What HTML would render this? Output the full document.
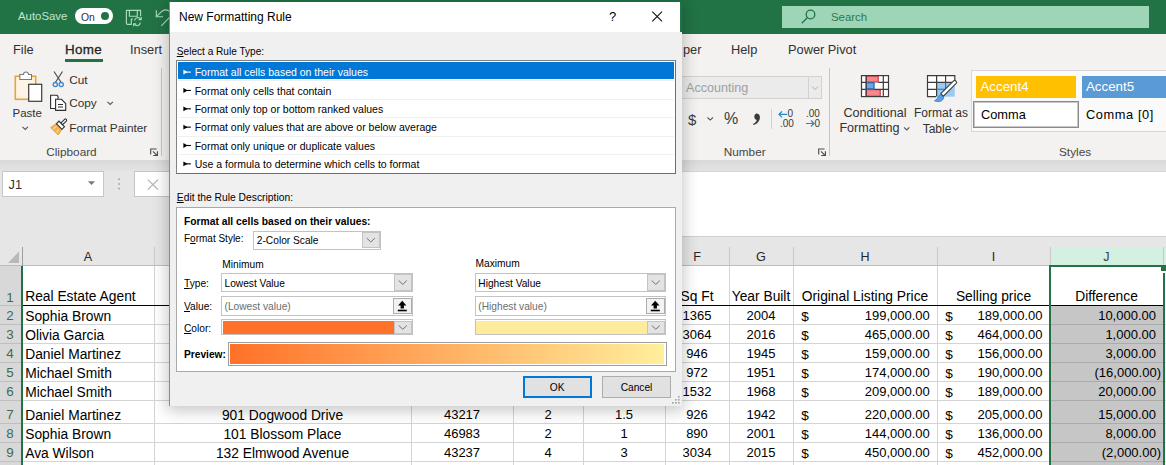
<!DOCTYPE html><html><head><meta charset="utf-8"><style>
html,body{margin:0;padding:0;}
body{width:1166px;height:465px;overflow:hidden;position:relative;background:#fff;font-family:"Liberation Sans", sans-serif;}
.t{position:absolute;white-space:nowrap;}
.b{position:absolute;box-sizing:border-box;}
svg{position:absolute;overflow:visible;}
</style></head><body>
<div class="b" style="left:0px;top:0px;width:1166px;height:34px;background:#217346;"></div>
<div class="t" style="left:18px;top:9.3px;font-size:11.4px;line-height:15px;color:#c2e4cd;font-weight:normal;">AutoSave</div>
<div class="b" style="left:75px;top:8px;width:38px;height:16px;background:#fff;border-radius:8px;"></div>
<div class="t" style="left:81px;top:10.9px;font-size:10.4px;line-height:14px;color:#333;font-weight:normal;">On</div>
<div class="b" style="left:101px;top:12px;width:8px;height:8px;background:#217346;border-radius:50%;"></div>
<svg style="left:0;top:0" width="1166" height="34"><g fill="none" stroke="#a9dcbd" stroke-width="1.15" stroke-linejoin="round"><path d="M140.6 16.2 V10.4 H126.4 V23.2 Q126.4 24.4 127.6 24.4 H131.3 V19 H133"/><path d="M129.4 10.4 V16.2 H137.3 V10.4"/><path d="M134.5 20.6 A3.4 3.4 0 0 1 140.6 19 M140.4 22.6 A3.4 3.4 0 0 1 134.3 24.2"/><path d="M141.2 17 V19.6 H138.6 M133.6 26.3 V23.7 H136.2"/></g><g fill="none" stroke="#a9dcbd" stroke-width="1.15"><path d="M156.3 10.2 V16.7 H163"/><path d="M156.6 16.4 L161.5 11.6 C164.5 8.8 170.5 9.5 170.5 14.5 C170.5 16 169.8 17.2 168.6 18.4 L161.3 25.8"/></g></svg>
<div class="b" style="left:782px;top:6px;width:367px;height:22px;background:#9fd5b7;"></div>
<svg style="left:0;top:0" width="1166" height="34"><g fill="none" stroke="#217346" stroke-width="1.3"><circle cx="810.5" cy="14.5" r="4.3"/><path d="M807.3 17.7 L801.8 23.2"/></g></svg>
<div class="t" style="left:831px;top:10.1px;font-size:11.4px;line-height:15px;color:#2a7a50;font-weight:normal;">Search</div>
<div class="b" style="left:0px;top:34px;width:1166px;height:126px;background:#f3f2f1;"></div>
<div class="t" style="left:13px;top:41.1px;font-size:12.8px;line-height:17px;color:#323130;font-weight:normal;">File</div>
<div class="t" style="left:65px;top:40.6px;font-size:13.4px;line-height:18px;color:#262626;font-weight:normal;letter-spacing:0.35px;-webkit-text-stroke:0.3px #262626;">Home</div>
<div class="b" style="left:65px;top:59px;width:38px;height:3px;background:#217346;"></div>
<div class="t" style="left:130px;top:41.1px;font-size:12.8px;line-height:17px;color:#323130;font-weight:normal;">Insert</div>
<div class="t" style="left:683px;top:41.1px;font-size:12.8px;line-height:17px;color:#323130;font-weight:normal;">per</div>
<div class="t" style="left:731px;top:41.1px;font-size:12.8px;line-height:17px;color:#323130;font-weight:normal;">Help</div>
<div class="t" style="left:788px;top:41.1px;font-size:12.8px;line-height:17px;color:#323130;font-weight:normal;">Power Pivot</div>
<svg style="left:0;top:0" width="170" height="160"><rect x="15.3" y="76.3" width="20.4" height="23" fill="#fdf4e6" stroke="#e9a23b" stroke-width="1.6"/><path d="M19.8 79.5 V74.5 H23.5 a2.5 2.5 0 0 1 5 0 H31.5 V79.5 Z" fill="#fff" stroke="#7a7a7a" stroke-width="1.1"/><rect x="28.7" y="84.3" width="13" height="17" fill="#fff" stroke="#3b3b3b" stroke-width="1.2"/><g fill="none" stroke="#4f4f4f" stroke-width="1.2"><path d="M54 71.5 L61.5 83 M62.5 71.5 L55 83"/></g><g fill="none" stroke="#3f86c9" stroke-width="1.3"><circle cx="55.3" cy="84.6" r="2.1"/><circle cx="61.2" cy="84.6" r="2.1"/></g><g fill="#fff" stroke="#2f2f2f" stroke-width="1.1"><path d="M50.6 95.3 H57 L58 96.3 V108.5 H50.6 Z"/><path d="M55.6 99.3 H61.5 L65.7 103.5 V110.4 H55.6 Z"/></g><g stroke="#2f2f2f" stroke-width="1"><path d="M58 104.5 H63 M58 107 H63"/></g><g transform="translate(60.6 125) rotate(-45)"><path d="M-2 -4 L-8.8 -5.2 L-8.8 5.2 L-2 4 Z" fill="#f7b04f" stroke="#ee9a2c" stroke-width="0.9" stroke-linejoin="round"/><path d="M-4 -2 L-8 -2.5 M-4.5 1.8 L-8 2.5" stroke="#fde3b8" stroke-width="1"/><rect x="-2" y="-3.9" width="3.6" height="7.8" fill="#fff" stroke="#333" stroke-width="1.1"/><path d="M1.6 -1.2 H6.8 A1.2 1.2 0 0 1 6.8 1.2 H1.6 Z" fill="#fff" stroke="#333" stroke-width="1.1"/></g><path d="M150.7 154.5 V149 H156.6 M153 151.4 L157 155.3 M157.4 151.3 V155.5 H153.3" fill="none" stroke="#484848" stroke-width="1.1"/></svg>
<div class="t" style="left:12.5px;top:105.3px;font-size:11.5px;line-height:16px;color:#323130;font-weight:normal;">Paste</div>
<svg style="left:0;top:0" width="170" height="160"><path d="M22.5 126.8 L25.2 129.4 L27.9 126.8" fill="none" stroke="#555" stroke-width="1.1"/><path d="M107.5 101.8 L110.2 104.4 L112.9 101.8" fill="none" stroke="#555" stroke-width="1.1"/></svg>
<div class="t" style="left:69.2px;top:72.3px;font-size:11.8px;line-height:16px;color:#323130;font-weight:normal;">Cut</div>
<div class="t" style="left:69.2px;top:95.3px;font-size:11.8px;line-height:16px;color:#323130;font-weight:normal;">Copy</div>
<div class="t" style="left:69.2px;top:119.6px;font-size:11.8px;line-height:16px;color:#323130;font-weight:normal;">Format Painter</div>
<div class="t" style="left:46.2px;top:144.0px;font-size:11.8px;line-height:16px;color:#484644;font-weight:normal;">Clipboard</div>
<div class="b" style="left:161px;top:68px;width:1px;height:88px;background:#c8c6c4;"></div>
<div class="b" style="left:676px;top:76px;width:146px;height:23px;background:#ebebeb;border:1px solid #d2d2d2;"></div>
<div class="b" style="left:808px;top:77px;width:1px;height:21px;background:#d2d2d2;"></div>
<svg style="left:0;top:0" width="1166" height="160"><path d="M812 86.5 L815 89.5 L818 86.5" fill="none" stroke="#b0b0b0" stroke-width="1"/><path d="M707.5 117.5 L710.2 120.1 L712.9 117.5" fill="none" stroke="#555" stroke-width="1.1"/></svg>
<div class="t" style="left:686px;top:80.0px;font-size:12.6px;line-height:17px;color:#a19f9d;font-weight:normal;">Accounting</div>
<div class="t" style="left:688px;top:108.9px;font-size:15px;line-height:21px;color:#3b3a39;font-weight:normal;">$</div>
<div class="t" style="left:724px;top:108.4px;font-size:16px;line-height:22px;color:#3b3a39;font-weight:normal;">%</div>
<svg style="left:0;top:0" width="1166" height="160"><path d="M756.3 113.6 a3.4 3.4 0 0 1 3.6 3.6 c0 3.8 -2.8 6.8 -6.4 7.8 l-0.5 -1 c2 -1 3.4 -2.4 3.7 -4 a3.4 3.4 0 0 1 -0.4 -6.4 z" fill="#3b3a39"/></svg>
<div class="b" style="left:771px;top:109px;width:1px;height:20px;background:#d2d0ce;"></div>
<svg style="left:0;top:0" width="1166" height="160"><g fill="none" stroke="#1e8bcd" stroke-width="1.2"><path d="M779 114.3 H787 M782 111.3 L779 114.3 L782 117.3"/><path d="M806 123.5 H814 M811 120.5 L814 123.5 L811 126.5"/></g></svg>
<div class="t" style="left:787.5px;top:108.0px;font-size:10px;line-height:11px;color:#3b3a39;font-weight:normal;">0</div>
<div class="t" style="left:780px;top:118.0px;font-size:10px;line-height:11px;color:#3b3a39;font-weight:normal;">.00</div>
<div class="t" style="left:806px;top:108.0px;font-size:10px;line-height:11px;color:#3b3a39;font-weight:normal;">.00</div>
<div class="t" style="left:814.5px;top:118.0px;font-size:10px;line-height:11px;color:#3b3a39;font-weight:normal;">0</div>
<div class="t" style="left:723.7px;top:144.0px;font-size:11.8px;line-height:16px;color:#484644;font-weight:normal;">Number</div>
<svg style="left:0;top:0" width="1166" height="160"><path d="M818.7 154.5 V149 H824.6 M821 151.4 L825 155.3 M825.4 151.3 V155.5 H821.3" fill="none" stroke="#484848" stroke-width="1.1"/></svg>
<div class="b" style="left:829px;top:68px;width:1px;height:88px;background:#c8c6c4;"></div>
<svg style="left:0;top:0" width="1166" height="160"><rect x="861.5" y="75.5" width="27" height="21" fill="#fff"/><rect x="866" y="75.8" width="12.5" height="6.5" fill="#f7868d"/><rect x="866" y="89.3" width="14.5" height="7" fill="#f7868d"/><rect x="866" y="82.3" width="8.5" height="7" fill="#6aa8e0"/><g fill="none" stroke="#c0343c" stroke-width="1"><rect x="866.5" y="76" width="11.7" height="6"/><rect x="866.5" y="89.7" width="13.7" height="6.5"/></g><rect x="866.5" y="82.8" width="7.5" height="6" fill="none" stroke="#1f5fa6" stroke-width="1"/><g fill="none" stroke="#3b3b3b" stroke-width="1.2"><rect x="861.5" y="75.6" width="27" height="21"/><path d="M861.5 82.3 H866 M878.5 82.3 H888.5 M861.5 89.3 H866 M874.5 89.3 H888.5 M866 75.6 V96.6 M883.3 75.6 V96.6"/></g><rect x="927.5" y="75.5" width="27.3" height="21" fill="#fff"/><rect x="936.6" y="82.3" width="18.2" height="14.4" fill="#9ccaf0"/><g fill="none" stroke="#3b3b3b" stroke-width="1.2"><path d="M954.8 82 V75.6 H927.5 V96.6 H936"/><path d="M927.5 82.3 H954.8 M927.5 89.3 H936.6 M936.6 75.6 V96.6 M945.6 75.6 V82.3"/></g><g fill="none" stroke="#2f6fb0" stroke-width="1.1"><path d="M936.6 89.3 H948 M945.6 82.3 V92"/></g><path d="M940.8 93.6 L953.6 80.8 C955 79.4 957.6 82 956.2 83.4 L943.4 96.2 Z" fill="#fff" stroke="#3b3b3b" stroke-width="1.1"/><path d="M934.5 100.8 C937.5 100.2 937.5 96.5 940.2 94.6 L943.8 97.6 C942.8 101.2 939.5 102.6 934.5 100.8 Z" fill="#5aa2e6" stroke="#3a7cc0" stroke-width="0.9"/></svg>
<div class="t" style="left:775.0px;width:200px;text-align:center;top:104.5px;font-size:12.6px;line-height:17px;color:#323130;font-weight:normal;">Conditional</div>
<div class="t" style="left:769.5px;width:200px;text-align:center;top:120.2px;font-size:12.6px;line-height:17px;color:#323130;font-weight:normal;">Formatting</div>
<div class="t" style="left:841.0px;width:200px;text-align:center;top:105.0px;font-size:12px;line-height:16px;color:#323130;font-weight:normal;">Format as</div>
<div class="t" style="left:837.0px;width:200px;text-align:center;top:120.7px;font-size:12px;line-height:16px;color:#323130;font-weight:normal;">Table</div>
<svg style="left:0;top:0" width="1166" height="160"><path d="M904 127.3 L906.7 129.9 L909.4 127.3" fill="none" stroke="#555" stroke-width="1.1"/><path d="M953 127.3 L955.7 129.9 L958.4 127.3" fill="none" stroke="#555" stroke-width="1.1"/></svg>
<div class="b" style="left:971px;top:70px;width:200px;height:62px;background:#fafafa;border:1px solid #d6d6d6;"></div>
<div class="b" style="left:976px;top:76px;width:100px;height:22px;background:#ffc000;"></div>
<div class="t" style="left:980.5px;top:77.9px;font-size:13.3px;line-height:18px;color:#fff;font-weight:normal;">Accent4</div>
<div class="b" style="left:1082px;top:76px;width:90px;height:22px;background:#5b9bd5;"></div>
<div class="t" style="left:1086px;top:77.9px;font-size:13.3px;line-height:18px;color:#fff;font-weight:normal;">Accent5</div>
<div class="b" style="left:973px;top:101px;width:106px;height:27px;background:#fff;border:1px solid #8a8a8a;box-shadow:inset 0 0 0 1px #c8c8c8;"></div>
<div class="t" style="left:981px;top:105.5px;font-size:12.8px;line-height:17px;color:#000;font-weight:normal;">Comma</div>
<div class="t" style="left:1086px;top:105.5px;font-size:12.8px;line-height:17px;color:#000;font-weight:normal;letter-spacing:0.6px;">Comma [0]</div>
<div class="t" style="left:1059px;top:144.2px;font-size:11.8px;line-height:16px;color:#484644;font-weight:normal;">Styles</div>
<div class="b" style="left:0px;top:160px;width:1166px;height:106px;background:#e6e6e6;"></div>
<div class="b" style="left:0px;top:160px;width:1166px;height:11px;background:linear-gradient(#d9d9d9,#e3e3e3);"></div>
<div class="b" style="left:2px;top:171px;width:102px;height:26px;background:#fff;border:1px solid #c6c6c6;"></div>
<div class="b" style="left:134px;top:171px;width:60px;height:26px;background:#fff;border:1px solid #c6c6c6;"></div>
<div class="t" style="left:8.5px;top:176.0px;font-size:12.8px;line-height:17px;color:#333;font-weight:normal;">J1</div>
<svg style="left:0;top:0" width="200" height="200"><path d="M88 181.3 H95 L91.5 185 Z" fill="#777"/><g fill="#9a9a9a"><rect x="118.3" y="178.5" width="1.5" height="1.6"/><rect x="118.3" y="183.2" width="1.5" height="1.6"/><rect x="118.3" y="187.8" width="1.5" height="1.6"/></g><path d="M147.8 179.6 L158 189.6 M158 179.6 L147.8 189.6" stroke="#b3b3b3" stroke-width="1.3"/></svg>
<div class="b" style="left:400px;top:171px;width:766px;height:66px;background:#fff;border-top:1px solid #d4d4d4;border-bottom:1px solid #cfcfcf;"></div>
<div class="b" style="left:0px;top:247px;width:1166px;height:19px;background:#e6e6e6;"></div>
<div class="b" style="left:1050px;top:247px;width:116px;height:19px;background:#d3f0e0;"></div>
<div class="b" style="left:154px;top:247px;width:1px;height:19px;background:#c9c9c9;"></div>
<div class="b" style="left:411px;top:247px;width:1px;height:19px;background:#c9c9c9;"></div>
<div class="b" style="left:513px;top:247px;width:1px;height:19px;background:#c9c9c9;"></div>
<div class="b" style="left:583px;top:247px;width:1px;height:19px;background:#c9c9c9;"></div>
<div class="b" style="left:665px;top:247px;width:1px;height:19px;background:#c9c9c9;"></div>
<div class="b" style="left:729px;top:247px;width:1px;height:19px;background:#c9c9c9;"></div>
<div class="b" style="left:793px;top:247px;width:1px;height:19px;background:#c9c9c9;"></div>
<div class="b" style="left:937px;top:247px;width:1px;height:19px;background:#c9c9c9;"></div>
<div class="b" style="left:1050px;top:247px;width:1px;height:19px;background:#c9c9c9;"></div>
<div class="b" style="left:0px;top:265px;width:1166px;height:1px;background:#bdbdbd;"></div>
<div class="b" style="left:1050px;top:265px;width:116px;height:1px;background:#217346;"></div>
<div class="b" style="left:1163px;top:247px;width:1px;height:19px;background:#c9c9c9;"></div>
<div class="t" style="left:-12.0px;width:200px;text-align:center;top:248.5px;font-size:12.6px;line-height:17px;color:#262626;font-weight:normal;">A</div>
<div class="t" style="left:182.5px;width:200px;text-align:center;top:248.5px;font-size:12.6px;line-height:17px;color:#262626;font-weight:normal;">B</div>
<div class="t" style="left:362.0px;width:200px;text-align:center;top:248.5px;font-size:12.6px;line-height:17px;color:#262626;font-weight:normal;">C</div>
<div class="t" style="left:448.0px;width:200px;text-align:center;top:248.5px;font-size:12.6px;line-height:17px;color:#262626;font-weight:normal;">D</div>
<div class="t" style="left:524.0px;width:200px;text-align:center;top:248.5px;font-size:12.6px;line-height:17px;color:#262626;font-weight:normal;">E</div>
<div class="t" style="left:597.0px;width:200px;text-align:center;top:248.5px;font-size:12.6px;line-height:17px;color:#262626;font-weight:normal;">F</div>
<div class="t" style="left:661.0px;width:200px;text-align:center;top:248.5px;font-size:12.6px;line-height:17px;color:#262626;font-weight:normal;">G</div>
<div class="t" style="left:765.0px;width:200px;text-align:center;top:248.5px;font-size:12.6px;line-height:17px;color:#262626;font-weight:normal;">H</div>
<div class="t" style="left:893.5px;width:200px;text-align:center;top:248.5px;font-size:12.6px;line-height:17px;color:#262626;font-weight:normal;">I</div>
<div class="t" style="left:1006.5px;width:200px;text-align:center;top:248.5px;font-size:12.6px;line-height:17px;color:#2c4a3a;font-weight:normal;">J</div>
<svg style="left:0;top:0" width="30" height="270"><path d="M8 263 H19 V251.5 Z" fill="#b8b8b8"/></svg>
<div class="b" style="left:21.5px;top:247px;width:1px;height:19px;background:#9e9e9e;"></div>
<div class="b" style="left:0px;top:266px;width:22px;height:214px;background:#d8d8d8;"></div>
<div class="b" style="left:0px;top:305px;width:22px;height:1px;background:#bfbfbf;"></div>
<div class="b" style="left:0px;top:324px;width:22px;height:1px;background:#bfbfbf;"></div>
<div class="b" style="left:0px;top:343px;width:22px;height:1px;background:#bfbfbf;"></div>
<div class="b" style="left:0px;top:362px;width:22px;height:1px;background:#bfbfbf;"></div>
<div class="b" style="left:0px;top:381px;width:22px;height:1px;background:#bfbfbf;"></div>
<div class="b" style="left:0px;top:400px;width:22px;height:1px;background:#bfbfbf;"></div>
<div class="b" style="left:0px;top:423px;width:22px;height:1px;background:#bfbfbf;"></div>
<div class="b" style="left:0px;top:442px;width:22px;height:1px;background:#bfbfbf;"></div>
<div class="b" style="left:0px;top:461px;width:22px;height:1px;background:#bfbfbf;"></div>
<div class="b" style="left:0px;top:480px;width:22px;height:1px;background:#bfbfbf;"></div>
<div class="t" style="left:0.0px;width:20px;text-align:center;top:288.6px;font-size:13.4px;line-height:18px;color:#3f6b52;font-weight:normal;">1</div>
<div class="t" style="left:0.0px;width:20px;text-align:center;top:307.4px;font-size:13.4px;line-height:18px;color:#3f6b52;font-weight:normal;">2</div>
<div class="t" style="left:0.0px;width:20px;text-align:center;top:326.4px;font-size:13.4px;line-height:18px;color:#3f6b52;font-weight:normal;">3</div>
<div class="t" style="left:0.0px;width:20px;text-align:center;top:345.4px;font-size:13.4px;line-height:18px;color:#3f6b52;font-weight:normal;">4</div>
<div class="t" style="left:0.0px;width:20px;text-align:center;top:364.4px;font-size:13.4px;line-height:18px;color:#3f6b52;font-weight:normal;">5</div>
<div class="t" style="left:0.0px;width:20px;text-align:center;top:383.4px;font-size:13.4px;line-height:18px;color:#3f6b52;font-weight:normal;">6</div>
<div class="t" style="left:0.0px;width:20px;text-align:center;top:406.4px;font-size:13.4px;line-height:18px;color:#3f6b52;font-weight:normal;">7</div>
<div class="t" style="left:0.0px;width:20px;text-align:center;top:425.4px;font-size:13.4px;line-height:18px;color:#3f6b52;font-weight:normal;">8</div>
<div class="t" style="left:0.0px;width:20px;text-align:center;top:444.4px;font-size:13.4px;line-height:18px;color:#3f6b52;font-weight:normal;">9</div>
<div class="b" style="left:21px;top:266px;width:2px;height:214px;background:#217346;"></div>
<div class="b" style="left:23px;top:266px;width:1143px;height:214px;background:#fff;"></div>
<div class="b" style="left:1051px;top:306px;width:112px;height:174px;background:#c6c6c6;"></div>
<div class="b" style="left:23px;top:324px;width:1027px;height:1px;background:#d4d4d4;"></div>
<div class="b" style="left:1051px;top:324px;width:112px;height:1px;background:#ababab;"></div>
<div class="b" style="left:23px;top:343px;width:1027px;height:1px;background:#d4d4d4;"></div>
<div class="b" style="left:1051px;top:343px;width:112px;height:1px;background:#ababab;"></div>
<div class="b" style="left:23px;top:362px;width:1027px;height:1px;background:#d4d4d4;"></div>
<div class="b" style="left:1051px;top:362px;width:112px;height:1px;background:#ababab;"></div>
<div class="b" style="left:23px;top:381px;width:1027px;height:1px;background:#d4d4d4;"></div>
<div class="b" style="left:1051px;top:381px;width:112px;height:1px;background:#ababab;"></div>
<div class="b" style="left:23px;top:400px;width:1027px;height:1px;background:#d4d4d4;"></div>
<div class="b" style="left:1051px;top:400px;width:112px;height:1px;background:#ababab;"></div>
<div class="b" style="left:23px;top:423px;width:1027px;height:1px;background:#d4d4d4;"></div>
<div class="b" style="left:1051px;top:423px;width:112px;height:1px;background:#ababab;"></div>
<div class="b" style="left:23px;top:442px;width:1027px;height:1px;background:#d4d4d4;"></div>
<div class="b" style="left:1051px;top:442px;width:112px;height:1px;background:#ababab;"></div>
<div class="b" style="left:23px;top:461px;width:1027px;height:1px;background:#d4d4d4;"></div>
<div class="b" style="left:1051px;top:461px;width:112px;height:1px;background:#ababab;"></div>
<div class="b" style="left:23px;top:480px;width:1027px;height:1px;background:#d4d4d4;"></div>
<div class="b" style="left:1051px;top:480px;width:112px;height:1px;background:#ababab;"></div>
<div class="b" style="left:1163px;top:266px;width:3px;height:214px;background:#fff;"></div>
<div class="b" style="left:1163px;top:324px;width:3px;height:1px;background:#d4d4d4;"></div>
<div class="b" style="left:1163px;top:343px;width:3px;height:1px;background:#d4d4d4;"></div>
<div class="b" style="left:1163px;top:362px;width:3px;height:1px;background:#d4d4d4;"></div>
<div class="b" style="left:1163px;top:381px;width:3px;height:1px;background:#d4d4d4;"></div>
<div class="b" style="left:1163px;top:400px;width:3px;height:1px;background:#d4d4d4;"></div>
<div class="b" style="left:1163px;top:423px;width:3px;height:1px;background:#d4d4d4;"></div>
<div class="b" style="left:1163px;top:442px;width:3px;height:1px;background:#d4d4d4;"></div>
<div class="b" style="left:1163px;top:461px;width:3px;height:1px;background:#d4d4d4;"></div>
<div class="b" style="left:1163px;top:480px;width:3px;height:1px;background:#d4d4d4;"></div>
<div class="b" style="left:154px;top:266px;width:1px;height:214px;background:#d4d4d4;"></div>
<div class="b" style="left:411px;top:266px;width:1px;height:214px;background:#d4d4d4;"></div>
<div class="b" style="left:513px;top:266px;width:1px;height:214px;background:#d4d4d4;"></div>
<div class="b" style="left:583px;top:266px;width:1px;height:214px;background:#d4d4d4;"></div>
<div class="b" style="left:665px;top:266px;width:1px;height:214px;background:#d4d4d4;"></div>
<div class="b" style="left:729px;top:266px;width:1px;height:214px;background:#d4d4d4;"></div>
<div class="b" style="left:793px;top:266px;width:1px;height:214px;background:#d4d4d4;"></div>
<div class="b" style="left:937px;top:266px;width:1px;height:214px;background:#d4d4d4;"></div>
<div class="b" style="left:1050px;top:266px;width:1px;height:214px;background:#d4d4d4;"></div>
<div class="b" style="left:23px;top:304.5px;width:1140px;height:1.6px;background:#000;"></div>
<div class="b" style="left:1049px;top:265px;width:2px;height:215px;background:#217346;"></div>
<div class="b" style="left:1162.5px;top:272.5px;width:2px;height:208px;background:#217346;"></div>
<div class="b" style="left:1049px;top:265px;width:114px;height:2px;background:#217346;"></div>
<div class="b" style="left:1161px;top:265px;width:5px;height:6px;background:#217346;"></div>
<div class="t" style="left:25.2px;top:287.0px;font-size:13.8px;line-height:19px;color:#000;font-weight:normal;">Real Estate Agent</div>
<div class="t" style="left:597.0px;width:200px;text-align:center;top:287.0px;font-size:13.8px;line-height:19px;color:#000;font-weight:normal;">Sq Ft</div>
<div class="t" style="left:661.0px;width:200px;text-align:center;top:287.0px;font-size:13.8px;line-height:19px;color:#000;font-weight:normal;">Year Built</div>
<div class="t" style="left:765.0px;width:200px;text-align:center;top:287.0px;font-size:13.8px;line-height:19px;color:#000;font-weight:normal;">Original Listing Price</div>
<div class="t" style="left:893.5px;width:200px;text-align:center;top:287.0px;font-size:13.8px;line-height:19px;color:#000;font-weight:normal;">Selling price</div>
<div class="t" style="left:1006.5px;width:200px;text-align:center;top:287.0px;font-size:13.8px;line-height:19px;color:#000;font-weight:normal;">Difference</div>
<div class="t" style="left:25.2px;top:306.5px;font-size:13.8px;line-height:19px;color:#000;font-weight:normal;">Sophia Brown</div>
<div class="t" style="left:597.0px;width:200px;text-align:center;top:307.0px;font-size:13.0px;line-height:18px;color:#000;font-weight:normal;">1365</div>
<div class="t" style="left:661.0px;width:200px;text-align:center;top:307.0px;font-size:13.0px;line-height:18px;color:#000;font-weight:normal;">2004</div>
<div class="t" style="left:801.2px;top:306.5px;font-size:13.6px;line-height:19px;color:#000;font-weight:normal;">$</div>
<div class="t" style="left:629.8px;width:300px;text-align:right;top:307.0px;font-size:13.0px;line-height:18px;color:#000;font-weight:normal;">199,000.00</div>
<div class="t" style="left:945.2px;top:306.5px;font-size:13.6px;line-height:19px;color:#000;font-weight:normal;">$</div>
<div class="t" style="left:742.5px;width:300px;text-align:right;top:307.0px;font-size:13.0px;line-height:18px;color:#000;font-weight:normal;">189,000.00</div>
<div class="t" style="left:856px;width:300px;text-align:right;top:307.0px;font-size:13.0px;line-height:18px;color:#000;font-weight:normal;">10,000.00</div>
<div class="t" style="left:25.2px;top:325.5px;font-size:13.8px;line-height:19px;color:#000;font-weight:normal;">Olivia Garcia</div>
<div class="t" style="left:597.0px;width:200px;text-align:center;top:326.0px;font-size:13.0px;line-height:18px;color:#000;font-weight:normal;">3064</div>
<div class="t" style="left:661.0px;width:200px;text-align:center;top:326.0px;font-size:13.0px;line-height:18px;color:#000;font-weight:normal;">2016</div>
<div class="t" style="left:801.2px;top:325.5px;font-size:13.6px;line-height:19px;color:#000;font-weight:normal;">$</div>
<div class="t" style="left:629.8px;width:300px;text-align:right;top:326.0px;font-size:13.0px;line-height:18px;color:#000;font-weight:normal;">465,000.00</div>
<div class="t" style="left:945.2px;top:325.5px;font-size:13.6px;line-height:19px;color:#000;font-weight:normal;">$</div>
<div class="t" style="left:742.5px;width:300px;text-align:right;top:326.0px;font-size:13.0px;line-height:18px;color:#000;font-weight:normal;">464,000.00</div>
<div class="t" style="left:856px;width:300px;text-align:right;top:326.0px;font-size:13.0px;line-height:18px;color:#000;font-weight:normal;">1,000.00</div>
<div class="t" style="left:25.2px;top:344.5px;font-size:13.8px;line-height:19px;color:#000;font-weight:normal;">Daniel Martinez</div>
<div class="t" style="left:597.0px;width:200px;text-align:center;top:345.0px;font-size:13.0px;line-height:18px;color:#000;font-weight:normal;">946</div>
<div class="t" style="left:661.0px;width:200px;text-align:center;top:345.0px;font-size:13.0px;line-height:18px;color:#000;font-weight:normal;">1945</div>
<div class="t" style="left:801.2px;top:344.5px;font-size:13.6px;line-height:19px;color:#000;font-weight:normal;">$</div>
<div class="t" style="left:629.8px;width:300px;text-align:right;top:345.0px;font-size:13.0px;line-height:18px;color:#000;font-weight:normal;">159,000.00</div>
<div class="t" style="left:945.2px;top:344.5px;font-size:13.6px;line-height:19px;color:#000;font-weight:normal;">$</div>
<div class="t" style="left:742.5px;width:300px;text-align:right;top:345.0px;font-size:13.0px;line-height:18px;color:#000;font-weight:normal;">156,000.00</div>
<div class="t" style="left:856px;width:300px;text-align:right;top:345.0px;font-size:13.0px;line-height:18px;color:#000;font-weight:normal;">3,000.00</div>
<div class="t" style="left:25.2px;top:363.5px;font-size:13.8px;line-height:19px;color:#000;font-weight:normal;">Michael Smith</div>
<div class="t" style="left:597.0px;width:200px;text-align:center;top:364.0px;font-size:13.0px;line-height:18px;color:#000;font-weight:normal;">972</div>
<div class="t" style="left:661.0px;width:200px;text-align:center;top:364.0px;font-size:13.0px;line-height:18px;color:#000;font-weight:normal;">1951</div>
<div class="t" style="left:801.2px;top:363.5px;font-size:13.6px;line-height:19px;color:#000;font-weight:normal;">$</div>
<div class="t" style="left:629.8px;width:300px;text-align:right;top:364.0px;font-size:13.0px;line-height:18px;color:#000;font-weight:normal;">174,000.00</div>
<div class="t" style="left:945.2px;top:363.5px;font-size:13.6px;line-height:19px;color:#000;font-weight:normal;">$</div>
<div class="t" style="left:742.5px;width:300px;text-align:right;top:364.0px;font-size:13.0px;line-height:18px;color:#000;font-weight:normal;">190,000.00</div>
<div class="t" style="left:861px;width:300px;text-align:right;top:364.0px;font-size:13.0px;line-height:18px;color:#000;font-weight:normal;">(16,000.00)</div>
<div class="t" style="left:25.2px;top:382.5px;font-size:13.8px;line-height:19px;color:#000;font-weight:normal;">Michael Smith</div>
<div class="t" style="left:597.0px;width:200px;text-align:center;top:383.0px;font-size:13.0px;line-height:18px;color:#000;font-weight:normal;">1532</div>
<div class="t" style="left:661.0px;width:200px;text-align:center;top:383.0px;font-size:13.0px;line-height:18px;color:#000;font-weight:normal;">1968</div>
<div class="t" style="left:801.2px;top:382.5px;font-size:13.6px;line-height:19px;color:#000;font-weight:normal;">$</div>
<div class="t" style="left:629.8px;width:300px;text-align:right;top:383.0px;font-size:13.0px;line-height:18px;color:#000;font-weight:normal;">209,000.00</div>
<div class="t" style="left:945.2px;top:382.5px;font-size:13.6px;line-height:19px;color:#000;font-weight:normal;">$</div>
<div class="t" style="left:742.5px;width:300px;text-align:right;top:383.0px;font-size:13.0px;line-height:18px;color:#000;font-weight:normal;">189,000.00</div>
<div class="t" style="left:856px;width:300px;text-align:right;top:383.0px;font-size:13.0px;line-height:18px;color:#000;font-weight:normal;">20,000.00</div>
<div class="t" style="left:25.2px;top:405.5px;font-size:13.8px;line-height:19px;color:#000;font-weight:normal;">Daniel Martinez</div>
<div class="t" style="left:182.5px;width:200px;text-align:center;top:405.5px;font-size:13.8px;line-height:19px;color:#000;font-weight:normal;">901 Dogwood Drive</div>
<div class="t" style="left:362.0px;width:200px;text-align:center;top:406.0px;font-size:13.0px;line-height:18px;color:#000;font-weight:normal;">43217</div>
<div class="t" style="left:448.0px;width:200px;text-align:center;top:406.0px;font-size:13.0px;line-height:18px;color:#000;font-weight:normal;">2</div>
<div class="t" style="left:524.0px;width:200px;text-align:center;top:406.0px;font-size:13.0px;line-height:18px;color:#000;font-weight:normal;">1.5</div>
<div class="t" style="left:597.0px;width:200px;text-align:center;top:406.0px;font-size:13.0px;line-height:18px;color:#000;font-weight:normal;">926</div>
<div class="t" style="left:661.0px;width:200px;text-align:center;top:406.0px;font-size:13.0px;line-height:18px;color:#000;font-weight:normal;">1942</div>
<div class="t" style="left:801.2px;top:405.5px;font-size:13.6px;line-height:19px;color:#000;font-weight:normal;">$</div>
<div class="t" style="left:629.8px;width:300px;text-align:right;top:406.0px;font-size:13.0px;line-height:18px;color:#000;font-weight:normal;">220,000.00</div>
<div class="t" style="left:945.2px;top:405.5px;font-size:13.6px;line-height:19px;color:#000;font-weight:normal;">$</div>
<div class="t" style="left:742.5px;width:300px;text-align:right;top:406.0px;font-size:13.0px;line-height:18px;color:#000;font-weight:normal;">205,000.00</div>
<div class="t" style="left:856px;width:300px;text-align:right;top:406.0px;font-size:13.0px;line-height:18px;color:#000;font-weight:normal;">15,000.00</div>
<div class="t" style="left:25.2px;top:424.5px;font-size:13.8px;line-height:19px;color:#000;font-weight:normal;">Sophia Brown</div>
<div class="t" style="left:182.5px;width:200px;text-align:center;top:424.5px;font-size:13.8px;line-height:19px;color:#000;font-weight:normal;">101 Blossom Place</div>
<div class="t" style="left:362.0px;width:200px;text-align:center;top:425.0px;font-size:13.0px;line-height:18px;color:#000;font-weight:normal;">46983</div>
<div class="t" style="left:448.0px;width:200px;text-align:center;top:425.0px;font-size:13.0px;line-height:18px;color:#000;font-weight:normal;">2</div>
<div class="t" style="left:524.0px;width:200px;text-align:center;top:425.0px;font-size:13.0px;line-height:18px;color:#000;font-weight:normal;">1</div>
<div class="t" style="left:597.0px;width:200px;text-align:center;top:425.0px;font-size:13.0px;line-height:18px;color:#000;font-weight:normal;">890</div>
<div class="t" style="left:661.0px;width:200px;text-align:center;top:425.0px;font-size:13.0px;line-height:18px;color:#000;font-weight:normal;">2001</div>
<div class="t" style="left:801.2px;top:424.5px;font-size:13.6px;line-height:19px;color:#000;font-weight:normal;">$</div>
<div class="t" style="left:629.8px;width:300px;text-align:right;top:425.0px;font-size:13.0px;line-height:18px;color:#000;font-weight:normal;">144,000.00</div>
<div class="t" style="left:945.2px;top:424.5px;font-size:13.6px;line-height:19px;color:#000;font-weight:normal;">$</div>
<div class="t" style="left:742.5px;width:300px;text-align:right;top:425.0px;font-size:13.0px;line-height:18px;color:#000;font-weight:normal;">136,000.00</div>
<div class="t" style="left:856px;width:300px;text-align:right;top:425.0px;font-size:13.0px;line-height:18px;color:#000;font-weight:normal;">8,000.00</div>
<div class="t" style="left:25.2px;top:443.5px;font-size:13.8px;line-height:19px;color:#000;font-weight:normal;">Ava Wilson</div>
<div class="t" style="left:182.5px;width:200px;text-align:center;top:443.5px;font-size:13.8px;line-height:19px;color:#000;font-weight:normal;">132 Elmwood Avenue</div>
<div class="t" style="left:362.0px;width:200px;text-align:center;top:444.0px;font-size:13.0px;line-height:18px;color:#000;font-weight:normal;">43237</div>
<div class="t" style="left:448.0px;width:200px;text-align:center;top:444.0px;font-size:13.0px;line-height:18px;color:#000;font-weight:normal;">4</div>
<div class="t" style="left:524.0px;width:200px;text-align:center;top:444.0px;font-size:13.0px;line-height:18px;color:#000;font-weight:normal;">3</div>
<div class="t" style="left:597.0px;width:200px;text-align:center;top:444.0px;font-size:13.0px;line-height:18px;color:#000;font-weight:normal;">3034</div>
<div class="t" style="left:661.0px;width:200px;text-align:center;top:444.0px;font-size:13.0px;line-height:18px;color:#000;font-weight:normal;">2015</div>
<div class="t" style="left:801.2px;top:443.5px;font-size:13.6px;line-height:19px;color:#000;font-weight:normal;">$</div>
<div class="t" style="left:629.8px;width:300px;text-align:right;top:444.0px;font-size:13.0px;line-height:18px;color:#000;font-weight:normal;">450,000.00</div>
<div class="t" style="left:945.2px;top:443.5px;font-size:13.6px;line-height:19px;color:#000;font-weight:normal;">$</div>
<div class="t" style="left:742.5px;width:300px;text-align:right;top:444.0px;font-size:13.0px;line-height:18px;color:#000;font-weight:normal;">452,000.00</div>
<div class="t" style="left:861px;width:300px;text-align:right;top:444.0px;font-size:13.0px;line-height:18px;color:#000;font-weight:normal;">(2,000.00)</div>
<div class="b" style="left:169px;top:2px;width:513px;height:403.5px;background:transparent;box-shadow:0 3px 14px 2px rgba(0,0,0,0.22);"></div>
<div class="b" style="left:169px;top:2px;width:511px;height:30px;background:#fff;"></div>
<div class="b" style="left:169px;top:32px;width:513px;height:373.5px;background:#f0f0f0;"></div>
<div class="b" style="left:169px;top:2px;width:1px;height:403.5px;background:#8a8a8a;"></div>
<div class="t" style="left:179px;top:9.1px;font-size:12.0px;line-height:16px;color:#000;font-weight:normal;">New Formatting Rule</div>
<div class="t" style="left:609px;top:8.1px;font-size:13px;line-height:18px;color:#000;font-weight:normal;">?</div>
<svg style="left:0;top:0" width="700" height="420"><path d="M652.3 11.6 L662 21.3 M662 11.6 L652.3 21.3" stroke="#111" stroke-width="1.1"/></svg>
<div class="t" style="left:176.8px;top:44.6px;font-size:10.1px;line-height:14px;color:#000;font-weight:normal;"><span style="text-decoration:underline;">S</span>elect a Rule Type:</div>
<div class="b" style="left:176px;top:60px;width:500px;height:114px;background:#fff;border:1px solid #828282;border-right-color:#6e6e6e;border-bottom-color:#6e6e6e;"></div>
<div class="b" style="left:178px;top:62px;width:496px;height:16.5px;background:#0078d7;"></div>
<svg style="left:0;top:0" width="200" height="200"><path d="M183.4 69.7 L187.6 72.1 L183.4 74.5 Z" fill="#fff"/><rect x="186" y="71.55" width="4.9" height="1.1" fill="#fff"/></svg>
<div class="t" style="left:194.7px;top:65.4px;font-size:10.5px;line-height:14px;color:#fff;font-weight:normal;">Format all cells based on their values</div>
<div class="b" style="left:178px;top:80.45000000000002px;width:496px;height:1px;background:#f0f0f0;"></div>
<svg style="left:0;top:0" width="200" height="200"><path d="M183.4 88.1 L187.6 90.5 L183.4 92.9 Z" fill="#000"/><rect x="186" y="89.90" width="4.9" height="1.1" fill="#000"/></svg>
<div class="t" style="left:194.7px;top:83.8px;font-size:10.5px;line-height:14px;color:#000;font-weight:normal;">Format only cells that contain</div>
<div class="b" style="left:178px;top:98.80000000000001px;width:496px;height:1px;background:#f0f0f0;"></div>
<svg style="left:0;top:0" width="200" height="200"><path d="M183.4 106.4 L187.6 108.8 L183.4 111.2 Z" fill="#000"/><rect x="186" y="108.25" width="4.9" height="1.1" fill="#000"/></svg>
<div class="t" style="left:194.7px;top:102.1px;font-size:10.5px;line-height:14px;color:#000;font-weight:normal;">Format only top or bottom ranked values</div>
<div class="b" style="left:178px;top:117.15px;width:496px;height:1px;background:#f0f0f0;"></div>
<svg style="left:0;top:0" width="200" height="200"><path d="M183.4 124.8 L187.6 127.2 L183.4 129.6 Z" fill="#000"/><rect x="186" y="126.60" width="4.9" height="1.1" fill="#000"/></svg>
<div class="t" style="left:194.7px;top:120.4px;font-size:10.5px;line-height:14px;color:#000;font-weight:normal;">Format only values that are above or below average</div>
<div class="b" style="left:178px;top:135.50000000000003px;width:496px;height:1px;background:#f0f0f0;"></div>
<svg style="left:0;top:0" width="200" height="200"><path d="M183.4 143.1 L187.6 145.5 L183.4 147.9 Z" fill="#000"/><rect x="186" y="144.95" width="4.9" height="1.1" fill="#000"/></svg>
<div class="t" style="left:194.7px;top:138.8px;font-size:10.5px;line-height:14px;color:#000;font-weight:normal;">Format only unique or duplicate values</div>
<div class="b" style="left:178px;top:153.85px;width:496px;height:1px;background:#f0f0f0;"></div>
<svg style="left:0;top:0" width="200" height="200"><path d="M183.4 161.4 L187.6 163.8 L183.4 166.2 Z" fill="#000"/><rect x="186" y="163.30" width="4.9" height="1.1" fill="#000"/></svg>
<div class="t" style="left:194.7px;top:157.1px;font-size:10.5px;line-height:14px;color:#000;font-weight:normal;">Use a formula to determine which cells to format</div>
<div class="t" style="left:176.8px;top:190.9px;font-size:10.3px;line-height:14px;color:#000;font-weight:normal;"><span style="text-decoration:underline;">E</span>dit the Rule Description:</div>
<div class="b" style="left:176px;top:206.5px;width:500px;height:165px;background:#fff;border:1px solid #a9a9a9;"></div>
<div class="t" style="left:184px;top:215.1px;font-size:10.3px;line-height:14px;color:#000;font-weight:bold;">Format all cells based on their values:</div>
<div class="t" style="left:184px;top:232.4px;font-size:10.0px;line-height:14px;color:#000;font-weight:normal;">F<span style="text-decoration:underline;">o</span>rmat Style:</div>
<div class="b" style="left:253.3px;top:230.5px;width:127.69999999999999px;height:19.0px;background:#fff;border:1px solid #c3c3c3;"></div>
<div class="b" style="left:362px;top:232.0px;width:17.5px;height:16.0px;background:#e3e3e3;border:1px solid #c3c3c3;"></div>
<svg style="left:0;top:0" width="700" height="420"><path d="M366.8 238.2 L370.8 242.0 L374.8 238.2" fill="none" stroke="#707070" stroke-width="1"/></svg>
<div class="t" style="left:256.8px;top:234.1px;font-size:10.2px;line-height:14px;color:#000;font-weight:normal;">2-Color Scale</div>
<div class="t" style="left:222.3px;top:257.6px;font-size:10.2px;line-height:14px;color:#000;font-weight:normal;">Minimum</div>
<div class="t" style="left:475.5px;top:257.3px;font-size:10.2px;line-height:14px;color:#000;font-weight:normal;">Maximum</div>
<div class="t" style="left:184px;top:276.9px;font-size:10.2px;line-height:14px;color:#000;font-weight:normal;"><span style="text-decoration:underline;">T</span>ype:</div>
<div class="t" style="left:184px;top:300.1px;font-size:10.2px;line-height:14px;color:#000;font-weight:normal;"><span style="text-decoration:underline;">V</span>alue:</div>
<div class="t" style="left:184px;top:322.1px;font-size:10.2px;line-height:14px;color:#000;font-weight:normal;"><span style="text-decoration:underline;">C</span>olor:</div>
<div class="b" style="left:221px;top:272.5px;width:192px;height:19.80000000000001px;background:#fff;border:1px solid #c3c3c3;"></div>
<div class="b" style="left:394px;top:274.0px;width:17.5px;height:16.80000000000001px;background:#e3e3e3;border:1px solid #c3c3c3;"></div>
<svg style="left:0;top:0" width="700" height="420"><path d="M398.8 280.6 L402.8 284.4 L406.8 280.6" fill="none" stroke="#707070" stroke-width="1"/></svg>
<div class="t" style="left:224.5px;top:276.5px;font-size:10.2px;line-height:14px;color:#000;font-weight:normal;">Lowest Value</div>
<div class="b" style="left:221px;top:296px;width:192px;height:19.600000000000023px;background:#fff;border:1px solid #c3c3c3;"></div>
<div class="b" style="left:393px;top:297.5px;width:18.5px;height:16.600000000000023px;background:#f2f2f2;border:1px solid #adadad;"></div>
<svg style="left:0;top:0" width="700" height="420"><path d="M402.2 300.8 L398.1 305.5 H400.6 V308.6 H403.9 V305.5 H406.4 Z" fill="#000"/><rect x="397.8" y="309.7" width="9" height="1.6" fill="#000"/></svg>
<div class="t" style="left:224.5px;top:299.9px;font-size:10.2px;line-height:14px;color:#6d6d6d;font-weight:normal;">(Lowest value)</div>
<div class="b" style="left:221px;top:319.2px;width:192px;height:16.19999999999999px;background:#fff;border:1px solid #c3c3c3;"></div>
<div class="b" style="left:222.5px;top:320.7px;width:171.5px;height:13.199999999999989px;background:#ff7128;"></div>
<div class="b" style="left:394px;top:320.7px;width:17.5px;height:13.199999999999989px;background:#e3e3e3;border:1px solid #c3c3c3;"></div>
<svg style="left:0;top:0" width="700" height="420"><path d="M398.8 325.5 L402.8 329.3 L406.8 325.5" fill="none" stroke="#707070" stroke-width="1"/></svg>
<div class="b" style="left:474.8px;top:272.5px;width:191.2px;height:19.80000000000001px;background:#fff;border:1px solid #c3c3c3;"></div>
<div class="b" style="left:647px;top:274.0px;width:17.5px;height:16.80000000000001px;background:#e3e3e3;border:1px solid #c3c3c3;"></div>
<svg style="left:0;top:0" width="700" height="420"><path d="M651.8 280.6 L655.8 284.4 L659.8 280.6" fill="none" stroke="#707070" stroke-width="1"/></svg>
<div class="t" style="left:478.3px;top:276.5px;font-size:10.2px;line-height:14px;color:#000;font-weight:normal;">Highest Value</div>
<div class="b" style="left:474.8px;top:296px;width:191.2px;height:19.600000000000023px;background:#fff;border:1px solid #c3c3c3;"></div>
<div class="b" style="left:646px;top:297.5px;width:18.5px;height:16.600000000000023px;background:#f2f2f2;border:1px solid #adadad;"></div>
<svg style="left:0;top:0" width="700" height="420"><path d="M655.2 300.8 L651.0 305.5 H653.6 V308.6 H656.9 V305.5 H659.5 Z" fill="#000"/><rect x="650.8" y="309.7" width="9" height="1.6" fill="#000"/></svg>
<div class="t" style="left:478.3px;top:299.9px;font-size:10.2px;line-height:14px;color:#6d6d6d;font-weight:normal;">(Highest value)</div>
<div class="b" style="left:474.8px;top:319.2px;width:191.2px;height:16.19999999999999px;background:#fff;border:1px solid #c3c3c3;"></div>
<div class="b" style="left:476.3px;top:320.7px;width:170.7px;height:13.199999999999989px;background:#ffeb9c;"></div>
<div class="b" style="left:647px;top:320.7px;width:17.5px;height:13.199999999999989px;background:#e3e3e3;border:1px solid #c3c3c3;"></div>
<svg style="left:0;top:0" width="700" height="420"><path d="M651.8 325.5 L655.8 329.3 L659.8 325.5" fill="none" stroke="#707070" stroke-width="1"/></svg>
<div class="t" style="left:184px;top:348.4px;font-size:10.2px;line-height:14px;color:#000;font-weight:bold;">Preview:</div>
<div class="b" style="left:227.5px;top:341.5px;width:439px;height:24.5px;background:#fff;border:1px solid #a0a0a0;"></div>
<div class="b" style="left:230px;top:343.6px;width:434px;height:20px;background:linear-gradient(to right,#ff7128,#ffef9c);"></div>
<div class="b" style="left:523px;top:375.7px;width:68.5px;height:22.5px;background:#e1e1e1;border:2px solid #0078d7;"></div>
<div class="t" style="left:457.20000000000005px;width:200px;text-align:center;top:381.4px;font-size:10.2px;line-height:14px;color:#000;font-weight:normal;">OK</div>
<div class="b" style="left:602.2px;top:375.7px;width:68.5px;height:22.5px;background:#e1e1e1;border:1px solid #adadad;"></div>
<div class="t" style="left:536.5px;width:200px;text-align:center;top:381.4px;font-size:10.2px;line-height:14px;color:#000;font-weight:normal;">Cancel</div>
<svg style="left:0;top:0" width="700" height="420"><g fill="#a0a0a0"><rect x="678" y="396" width="1.6" height="1.6"/><rect x="675" y="399" width="1.6" height="1.6"/><rect x="678" y="399" width="1.6" height="1.6"/><rect x="672" y="402" width="1.6" height="1.6"/><rect x="675" y="402" width="1.6" height="1.6"/><rect x="678" y="402" width="1.6" height="1.6"/></g></svg>
</body></html>
